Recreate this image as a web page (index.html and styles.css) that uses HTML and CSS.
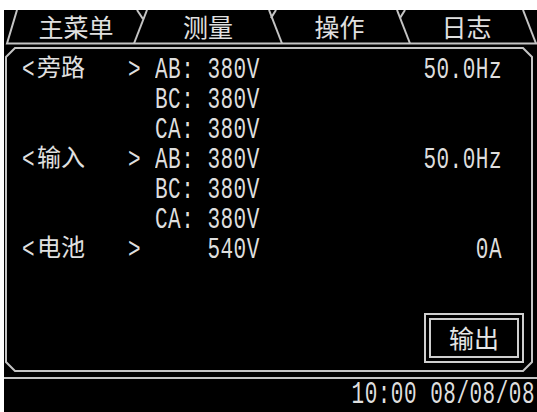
FILE: index.html
```html
<!DOCTYPE html>
<html lang="zh-CN">
<head>
<meta charset="utf-8">
<title>测量</title>
<link rel="stylesheet" href="styles.css">
</head>
<body>
<div class="screen">
  <nav class="tabs">
    <svg class="tab-lines" width="533" height="35" viewBox="0 0 533 35">
      <g fill="none" stroke="#c4c4c4" stroke-width="2">
        <path d="M13 0 L3 33.5 H533"/>
        <path d="M143 0 L130 33.5"/>
        <path d="M133 0 L139 9"/>
        <path d="M265 0 L278 33.5"/>
        <path d="M272 0 L267 8"/>
        <path d="M393 0 L406 33.5"/>
        <path d="M401 0 L396 8"/>
        <path d="M519 0 L532 33.5"/>
      </g>
    </svg>
    <span class="tab tab-main">主菜单</span>
    <span class="tab tab-measure">测量</span>
    <span class="tab tab-op">操作</span>
    <span class="tab tab-log">日志</span>
  </nav>

  <section class="panel">
    <svg class="panel-frame" width="528" height="325" viewBox="0 0 528 325">
      <path d="M10 1 H518 L527 10 V315 L518 324 H10 L1 315 V10 Z" fill="none" stroke="#c4c4c4" stroke-width="2"/>
    </svg>

    <div class="readings">
      <span class="label"><span class="lcd">&lt;</span>旁路</span>
      <span class="arrow"><span class="lcd">&gt;</span></span>
      <span class="value"><span class="lcd">AB: 380V</span></span>
      <span class="freq"><span class="lcd">50.0Hz</span></span>

      <span></span><span></span>
      <span class="value"><span class="lcd">BC: 380V</span></span>
      <span></span>

      <span></span><span></span>
      <span class="value"><span class="lcd">CA: 380V</span></span>
      <span></span>

      <span class="label"><span class="lcd">&lt;</span>输入</span>
      <span class="arrow"><span class="lcd">&gt;</span></span>
      <span class="value"><span class="lcd">AB: 380V</span></span>
      <span class="freq"><span class="lcd">50.0Hz</span></span>

      <span></span><span></span>
      <span class="value"><span class="lcd">BC: 380V</span></span>
      <span></span>

      <span></span><span></span>
      <span class="value"><span class="lcd">CA: 380V</span></span>
      <span></span>

      <span class="label"><span class="lcd">&lt;</span>电池</span>
      <span class="arrow"><span class="lcd">&gt;</span></span>
      <span class="value"><span class="lcd">    540V</span></span>
      <span class="freq"><span class="lcd">0A</span></span>
    </div>

    <div class="actions">
      <button class="out-btn" type="button"><span class="out-inner">输出</span></button>
    </div>
  </section>

  <footer class="status">
    <span class="lcd clock">10:00 08/08/08</span>
  </footer>
</div>
</body>
</html>
```

FILE: styles.css
```css
html, body {
  margin: 0;
  padding: 0;
  background: #ffffff;
}

body {
  width: 537px;
  height: 412px;
  overflow: hidden;
  font-family: "Noto Sans CJK SC", "Noto Sans", sans-serif;
  color: #e6e6e6;
}

.screen {
  margin: 10px 0 0 4px;
  width: 533px;
  height: 402px;
  background: #000000;
  display: flex;
  flex-direction: column;
}

/* Tab strip */
.tabs {
  position: relative;
  height: 35px;
  display: flex;
  padding-left: 8px;
  flex: none;
}

.tab-lines {
  position: absolute;
  left: 0;
  top: 0;
}

.tab {
  position: relative;
  font-size: 25px;
  line-height: 33px;
  text-align: center;
  color: #e0e0e0;
}

.tab-main { width: 128px; }
.tab-measure { width: 136px; }
.tab-op { width: 127px; }
.tab-log { width: 127px; }

/* Measurement panel */
.panel {
  position: relative;
  flex: none;
  margin: 2px 0 0 1px;
  width: 528px;
  height: 325px;
  display: flex;
  flex-direction: column;
}

.panel-frame {
  position: absolute;
  left: 0;
  top: 0;
}

.readings {
  position: relative;
  padding: 4px 31px 0 17px;
  display: grid;
  grid-template-columns: 106px 27px 1fr auto;
  grid-auto-rows: 30px;
  align-items: center;
  font-size: 24px;
  line-height: 30px;
  color: #e0e0e0;
}

/* narrow, tall digits of the panel display */
.lcd {
  display: inline-block;
  font-family: "Liberation Mono", "DejaVu Sans Mono", monospace;
  font-size: 21px;
  line-height: 16px;
  letter-spacing: 0.5px;
  white-space: pre;
  font-variant-numeric: slashed-zero;
  transform: scaleY(1.4);
  color: #dedede;
}

.label .lcd {
  margin-right: 2px;
}

.freq {
  text-align: right;
}

.actions {
  margin-top: auto;
  display: flex;
  justify-content: flex-end;
  padding: 0 9px 9px 0;
  position: relative;
}

.out-btn {
  width: 100px;
  height: 50px;
  padding: 3px;
  margin: 0;
  border: 2px solid #cfcfcf;
  background: #000000;
  display: flex;
}

.out-inner {
  flex: 1;
  border: 2px solid #cfcfcf;
  font-family: "Noto Sans CJK SC", sans-serif;
  font-size: 25px;
  line-height: 34px;
  color: #e6e6e6;
  text-align: center;
}

/* Status line */
.status {
  margin-top: 5px;
  border-top: 2px solid #c4c4c4;
  flex: 1;
  display: flex;
  justify-content: flex-end;
  align-items: center;
  padding-right: 2px;
}

.clock {
  transform: scaleY(1.45);
}
```
